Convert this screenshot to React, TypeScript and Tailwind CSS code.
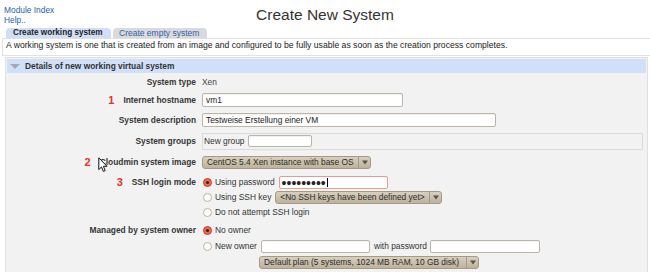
import React from "react";

const FONT = { fontFamily: '"Liberation Sans", Arial, sans-serif' };

function Radio({ on }: { on?: boolean }) {
  return on ? (
    <svg width="9" height="9" viewBox="0 0 9 9" className="shrink-0">
      <circle cx="4.5" cy="4.5" r="4" fill="#ec6a4e" stroke="#c5432b" strokeWidth="1" />
      <circle cx="4.5" cy="4.5" r="1.6" fill="#3b2424" />
    </svg>
  ) : (
    <svg width="9" height="9" viewBox="0 0 9 9" className="shrink-0">
      <circle cx="4.5" cy="4.5" r="4" fill="#fbfbfa" stroke="#bab3a7" strokeWidth="1" />
    </svg>
  );
}

function Arrow() {
  return (
    <svg width="6" height="5" viewBox="0 0 6 5">
      <path d="M0 0.5 L6 0.5 L3 4.5 Z" fill="#5a5448" />
    </svg>
  );
}

function Select({ cls, children }: { cls: string; children: React.ReactNode }) {
  return (
    <div
      className={`flex h-[13px] items-stretch rounded-[3px] border border-[#a59a85] bg-linear-to-b from-[#d8cfbd] to-[#bdb29d] text-[#2e2b26] ${cls}`}
    >
      <div className="flex flex-1 items-center overflow-hidden whitespace-nowrap pl-[4px]">{children}</div>
      <div className="flex w-[12px] shrink-0 items-center justify-center border-l border-[#a59a85]">
        <Arrow />
      </div>
    </div>
  );
}

function Input({ cls, children }: { cls: string; children?: React.ReactNode }) {
  return (
    <div
      className={`flex items-center overflow-hidden whitespace-nowrap rounded-[2px] border border-[#bcb4a6] bg-white pl-[3px] text-[#222] shadow-[inset_0_1px_1px_rgba(0,0,0,0.06)] ${cls}`}
    >
      {children}
    </div>
  );
}

function Num({ n }: { n: string }) {
  return <span className="mr-[9px] text-[11px] font-bold leading-none text-[#e6302a]">{n}</span>;
}

function Row({
  cls,
  label,
  num,
  children,
}: {
  cls: string;
  label: string;
  num?: string;
  children: React.ReactNode;
}) {
  return (
    <div className={`flex ${cls}`}>
      <div className="flex w-[189px] shrink-0 items-center justify-end font-bold text-[#363636]">
        {num && <Num n={num} />}
        {label}
      </div>
      <div className="ml-[6px] flex items-center">{children}</div>
    </div>
  );
}

export default function App() {
  return (
    <div
      className="relative h-[272px] w-[650px] overflow-hidden bg-white text-[8.4px] text-[#333]"
      style={FONT}
    >
      {/* header */}
      <div className="grid h-[28px] grid-cols-[1fr_auto_1fr]">
        <div className="pl-[4px] pt-[5px] leading-[10px] text-[#2c5db2]">
          <div>Module Index</div>
          <div>Help..</div>
        </div>
        <div className="mt-[5px] text-[15.5px] leading-[20px] text-[#333]">Create New System</div>
        <div />
      </div>

      {/* tabs */}
      <div className="flex h-[10px] gap-[2px] pl-[6px]">
        <div className="w-[105px] rounded-t-[4px] bg-[#d0dff7] pl-[7px] text-[8.2px] font-bold leading-[10px] text-[#222]">
          Create working system
        </div>
        <div className="w-[94px] rounded-t-[4px] bg-[#dadada] pl-[6px] text-[8.5px] leading-[10px] text-[#2f5fb0]">
          Create empty system
        </div>
      </div>

      {/* description */}
      <div className="ml-[2px] h-[18px] whitespace-nowrap border border-r-0 border-[#e2e2e2] pl-[3px] pt-[1px] text-[8.65px] leading-[10px] text-[#222]">
        A working system is one that is created from an image and configured to be fully usable as soon as the
        creation process completes.
      </div>

      {/* section */}
      <div className="ml-[5px] mt-[1px] h-[300px] w-[643px] border border-b-0 border-[#e0e0e0] bg-[#f2f2f2] px-[1px] pt-[1px]">
        <div className="flex h-[14px] items-center bg-[#d1e0f9]">
          <svg width="10" height="5" viewBox="0 0 10 5" className="ml-[3px]">
            <path d="M0 0 L10 0 L5 5 Z" fill="#a3aab3" />
          </svg>
          <span className="ml-[5px] font-bold text-[#333]">Details of new working virtual system</span>
        </div>

        <Row cls="h-[18px]" label="System type">
          <span className="text-[#444]">Xen</span>
        </Row>
        <Row cls="h-[18px]" label="Internet hostname" num="1">
          <Input cls="h-[14px] w-[201px]">vm1</Input>
        </Row>
        <Row cls="h-[22px]" label="System description">
          <Input cls="h-[14px] w-[294px]">Testweise Erstellung einer VM</Input>
        </Row>
        <Row cls="h-[20px]" label="System groups">
          <div className="flex h-[17px] w-[441px] items-center border border-[#dadada] pl-[1px]">
            <span>New group</span>
            <Input cls="ml-[3px] h-[12px] w-[64px]" />
          </div>
        </Row>
        <Row cls="h-[22px]" label="Cloudmin system image" num="2">
          <Select cls="w-[169px]">CentOS 5.4 Xen instance with base OS</Select>
        </Row>

        {/* SSH login mode */}
        <div className="flex pt-[2px]">
          <div className="flex h-[15px] w-[189px] shrink-0 items-center justify-end font-bold text-[#363636]">
            <Num n="3" />
            SSH login mode
          </div>
          <div className="ml-[7px] flex flex-col">
            <div className="flex h-[15px] items-center">
              <Radio on />
              <span className="ml-[3px]">Using password</span>
              <div className="ml-[4px] flex h-[13px] w-[109px] items-center rounded-[2px] border border-[#e99a92] bg-white pl-[2px]">
                <span className="text-[14px] leading-[10px] text-[#222]">•••••••••</span>
                <span className="ml-[1px] h-[9px] w-[1px] bg-black" />
              </div>
            </div>
            <div className="flex h-[15px] items-center">
              <Radio />
              <span className="ml-[3px]">Using SSH key</span>
              <Select cls="ml-[4px] w-[167px]">&lt;No SSH keys have been defined yet&gt;</Select>
            </div>
            <div className="flex h-[15px] items-center">
              <Radio />
              <span className="ml-[3px]">Do not attempt SSH login</span>
            </div>
          </div>
        </div>

        {/* Managed by system owner */}
        <div className="flex pt-[2px]">
          <div className="flex h-[16px] w-[189px] shrink-0 items-center justify-end font-bold text-[#363636]">
            Managed by system owner
          </div>
          <div className="ml-[7px] flex flex-col">
            <div className="flex h-[16px] items-center">
              <Radio on />
              <span className="ml-[3px]">No owner</span>
            </div>
            <div className="flex h-[16px] items-center">
              <Radio />
              <span className="ml-[3px]">New owner</span>
              <Input cls="ml-[4px] h-[13px] w-[109px]" />
              <span className="ml-[4px]">with password</span>
              <Input cls="ml-[3px] h-[13px] w-[110px]" />
            </div>
            <div className="flex h-[16px] items-center pl-[56px]">
              <Select cls="w-[220px]">Default plan (5 systems, 1024 MB RAM, 10 GB disk)</Select>
            </div>
          </div>
        </div>
      </div>

      {/* mouse pointer */}
      <svg width="10" height="16" viewBox="0 0 10 16" className="absolute left-[98px] top-[157px]">
        <path
          d="M0.8 0.8 L0.8 12.6 L3.5 10 L5.4 14.4 L7.2 13.6 L5.4 9.3 L9 9.3 Z"
          fill="#ffffff"
          stroke="#111"
          strokeWidth="1"
          strokeLinejoin="round"
        />
      </svg>
    </div>
  );
}
